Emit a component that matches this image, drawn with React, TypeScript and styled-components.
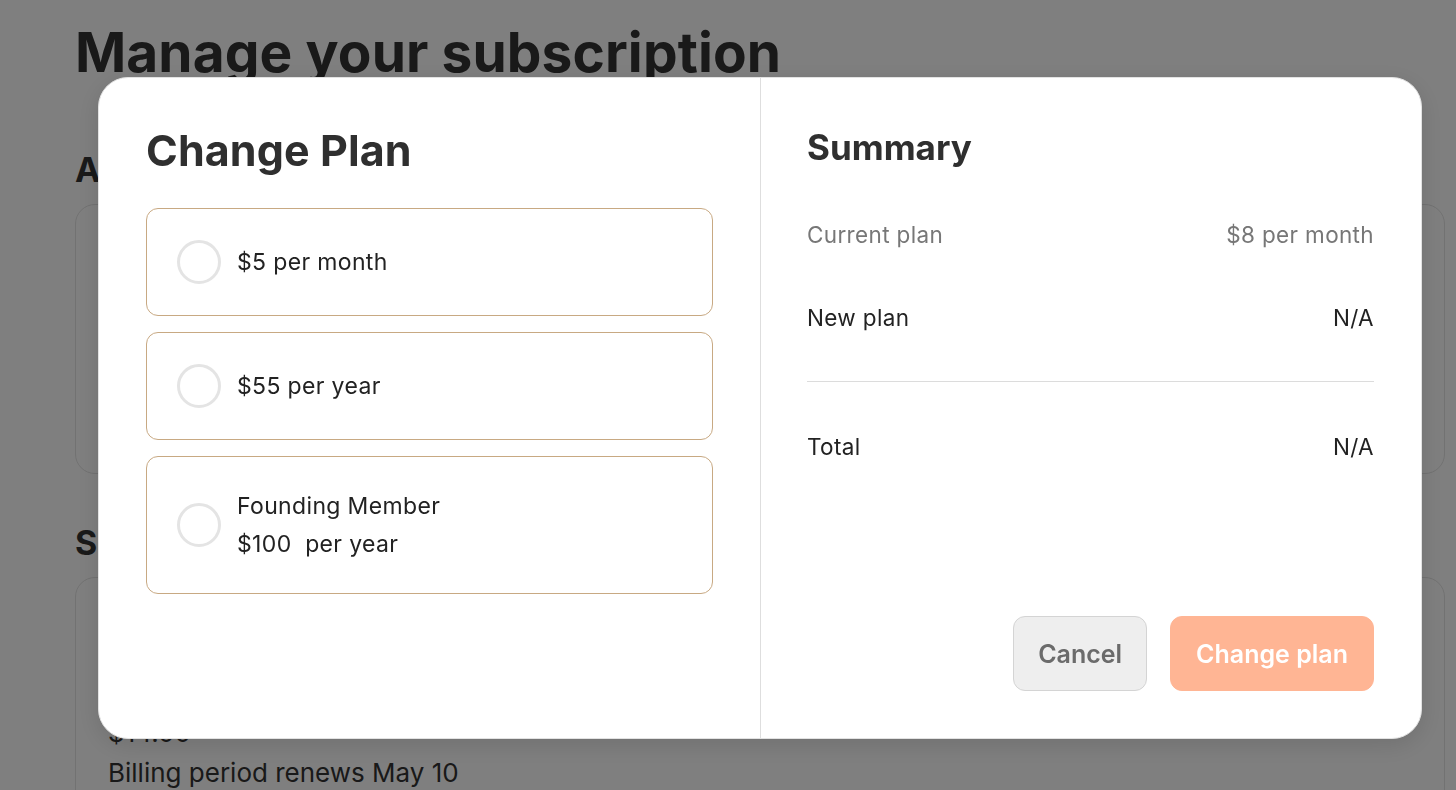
import React from 'react';
import styled, { createGlobalStyle } from 'styled-components';

const GlobalStyle = createGlobalStyle`
  html, body {
    margin: 0;
    padding: 0;
    background: #ffffff;
    font-family: Inter, "Noto Sans", "Liberation Sans", sans-serif;
    color: #333333;
    overflow: hidden;
  }
`;

const Page = styled.div`
  height: 790px;
  padding: 0 11px 0 75px;
  box-sizing: border-box;
  overflow: hidden;
`;

const PageTitle = styled.h1`
  margin: 0;
  padding-top: 20px;
  font-size: 55px;
  line-height: 64px;
  font-weight: 700;
  letter-spacing: 0.1px;
  color: #333;
`;

const SectionTitle = styled.h2`
  margin: 0;
  font-size: 34px;
  line-height: 40px;
  font-weight: 700;
  color: #333;
`;

const Section = styled.section<{ $top: number }>`
  margin-top: ${(p) => p.$top}px;
  display: flex;
  flex-direction: column;
  gap: 14px;
`;

const Card = styled.div<{ $height: number }>`
  height: ${(p) => p.$height}px;
  border: 1.5px solid #e4e4e4;
  border-radius: 20px;
  padding: 135px 32px 0;
  box-sizing: border-box;
`;

const CardLine = styled.div`
  font-size: 26px;
  line-height: 40px;
  color: #333;
`;

const Overlay = styled.div`
  position: fixed;
  inset: 0;
  background: rgba(0, 0, 0, 0.5);
  padding: 77px 0 0 98px;
  box-sizing: border-box;
`;

const Modal = styled.div`
  width: 1324px;
  height: 662px;
  background: #fff;
  border-radius: 30px;
  border: 1px solid #e2e2e2;
  box-shadow: 0 6px 24px rgba(0, 0, 0, 0.12);
  display: grid;
  grid-template-columns: 661px 1px 1fr;
  overflow: hidden;
  box-sizing: border-box;
`;

const Divider = styled.div`
  background: #dedede;
`;

const LeftPanel = styled.div`
  padding: 47px 47px 0 47px;
  display: flex;
  flex-direction: column;
`;

const ModalTitle = styled.h2`
  margin: 0 0 33px;
  font-size: 43px;
  line-height: 50px;
  font-weight: 700;
  letter-spacing: 0.1px;
  color: #2f2f2f;
`;

const OptionList = styled.div`
  display: flex;
  flex-direction: column;
  gap: 16px;
`;

const Option = styled.label<{ $height: number }>`
  height: ${(p) => p.$height}px;
  border: 1.5px solid #c8a983;
  border-radius: 12px;
  display: flex;
  align-items: center;
  gap: 16px;
  padding: 0 30px;
  box-sizing: border-box;
  cursor: pointer;
`;

const Radio = styled.span`
  width: 44px;
  height: 44px;
  border-radius: 50%;
  border: 3px solid #e4e4e4;
  box-sizing: border-box;
  flex-shrink: 0;
`;

const OptionText = styled.div`
  display: flex;
  flex-direction: column;
  font-size: 23px;
  line-height: 38px;
  letter-spacing: 0.35px;
  color: #222;
`;

const RightPanel = styled.div`
  padding: 49px 47px 47px 46px;
  display: flex;
  flex-direction: column;
`;

const SummaryTitle = styled.h2`
  margin: 0 0 34px;
  font-size: 35px;
  line-height: 41px;
  font-weight: 700;
  letter-spacing: 0;
  color: #2f2f2f;
`;

const Row = styled.div<{ $muted?: boolean }>`
  display: flex;
  justify-content: space-between;
  padding: 20px 0;
  margin-bottom: 17px;
  font-size: 22.5px;
  line-height: 26px;
  letter-spacing: 0.35px;
  color: ${(p) => (p.$muted ? '#777' : '#222')};
`;

const Rule = styled.hr`
  border: none;
  height: 1px;
  background: #dcdcdc;
  margin: 13px 0 32px;
`;

const Actions = styled.div`
  margin-top: auto;
  display: flex;
  justify-content: flex-end;
  gap: 23px;
`;

const Button = styled.button<{ $primary?: boolean }>`
  height: 75px;
  padding: 0 ${(p) => (p.$primary ? 25 : 24)}px;
  border-radius: 12px;
  font-family: inherit;
  font-size: 25px;
  font-weight: 600;
  border: 1.5px solid ${(p) => (p.$primary ? '#ffb594' : '#d4d4d4')};
  background: ${(p) => (p.$primary ? '#ffb594' : '#eeeeee')};
  color: ${(p) => (p.$primary ? '#ffffff' : '#6b6b6b')};
  cursor: pointer;
`;

const plans = [
  { id: 'month', lines: ['$5 per month'], height: 108 },
  { id: 'year', lines: ['$55 per year'], height: 108 },
  { id: 'founding', lines: ['Founding Member', '$100\u00a0 per year'], height: 138 },
];

export default function App() {
  return (
    <>
      <GlobalStyle />
      <Page>
        <PageTitle>Manage your subscription</PageTitle>
        <Section $top={66}>
          <SectionTitle>Account</SectionTitle>
          <Card $height={270} />
        </Section>
        <Section $top={49}>
          <SectionTitle>Subscription</SectionTitle>
          <Card $height={260}>
            <CardLine>$14.00</CardLine>
            <CardLine>Billing period renews May 10</CardLine>
          </Card>
        </Section>
      </Page>
      <Overlay>
        <Modal>
          <LeftPanel>
            <ModalTitle>Change Plan</ModalTitle>
            <OptionList>
              {plans.map((plan) => (
                <Option key={plan.id} $height={plan.height}>
                  <Radio />
                  <OptionText>
                    {plan.lines.map((line) => (
                      <span key={line}>{line}</span>
                    ))}
                  </OptionText>
                </Option>
              ))}
            </OptionList>
          </LeftPanel>
          <Divider />
          <RightPanel>
            <SummaryTitle>Summary</SummaryTitle>
            <Row $muted>
              <span>Current plan</span>
              <span>$8 per month</span>
            </Row>
            <Row>
              <span>New plan</span>
              <span>N/A</span>
            </Row>
            <Rule />
            <Row>
              <span>Total</span>
              <span>N/A</span>
            </Row>
            <Actions>
              <Button>Cancel</Button>
              <Button $primary>Change plan</Button>
            </Actions>
          </RightPanel>
        </Modal>
      </Overlay>
    </>
  );
}
